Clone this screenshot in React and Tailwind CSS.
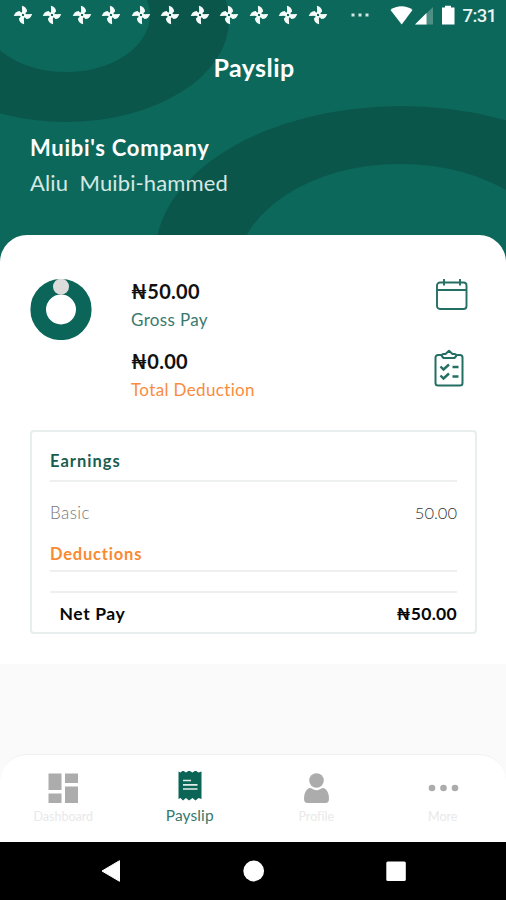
const Pinwheel = () => (
  <svg className="h-5 w-5 shrink-0" viewBox="0 0 20 20" fill="#f4fbf8">
    {[0, 90, 180, 270].map((a) => (
      <path key={a} transform={`rotate(${a} 10 10)`} d="M8.900 0.800C12 1.700 14 3.600 14.100 6.600L11.200 9.200 9.200 8.200Z" />
    ))}
    <path fillRule="evenodd" d="M10 6 14 10 10 14 6 10ZM10 8.800A1.200 1.200 0 1 0 10 11.200 1.200 1.200 0 1 0 10 8.800Z" />
  </svg>
);

const StatusBar = () => (
  <div className="flex h-[30px] items-center pl-[12.5px]">
    <div className="flex gap-[9.5px]">
      {Array.from({ length: 11 }, (_, i) => (
        <Pinwheel key={i} />
      ))}
    </div>
    <svg className="ml-[22px] h-[30px] w-[110px]" viewBox="350 0 110 30" fill="#fff">
      <path d="M351.500 13.500h3v3h-3zM358.500 13.500h3v3h-3zM365.500 13.500h3v3h-3z" fill="#d3e6e1" />
      <path d="M390.500 10C396.500 5 406.500 5 412.500 10L401.700 24.500Z" />
      <path d="M415 24.500 433 7V24.500Z" fill="#4c8f84" />
      <path d="M415 24.500 426.500 13V24.500Z" />
      <path d="M442 7.500h3V5.800h6v1.700h3.500V24.500H442Z" />
    </svg>
    <span className="ml-[3px] pt-[3px] font-[Roboto,sans-serif] text-[18.5px] font-medium tracking-[-0.6px] text-[#e9f5f2]">7:31</span>
  </div>
);

const Rings = () => (
  <svg className="absolute inset-0 h-[270px] w-full" viewBox="0 0 506 270" fill="#0b564b">
    <ellipse cx="66" cy="20" rx="163" ry="102" />
    <ellipse cx="66" cy="15" rx="84" ry="57" fill="#0d685c" />
    <ellipse cx="401" cy="256" rx="246" ry="150" />
    <ellipse cx="400" cy="274" rx="164" ry="110" fill="#0d685c" />
  </svg>
);

const Calendar = () => (
  <svg className="h-[34px] w-[34px]" viewBox="0 0 34 34" fill="none" stroke="#246f63" strokeWidth="1.900">
    <rect x="2" y="4.500" width="29.500" height="26.500" rx="3" />
    <path d="M2 12H31.500M9 1v6.500M25 1v6.500" />
  </svg>
);

const Checklist = () => (
  <svg className="h-[40px] w-[32px]" viewBox="0 0 32 40" fill="none" stroke="#246f63" strokeWidth="2">
    <path d="M8.500 7H5a2.500 2.500 0 0 0-2.500 2.500V35A2.500 2.500 0 0 0 5 37.500H27A2.500 2.500 0 0 0 29.500 35V9.500A2.500 2.500 0 0 0 27 7H23.500" />
    <path d="M8.800 8Q8.800 6 10.500 6H12.500L16 2.700 19.500 6H21.500Q23.200 6 23.200 8L21.500 10H10.500Z" strokeLinejoin="round" />
    <path d="M7.500 18.500 10.500 21.500 16 16.500M7.500 27.500 10.500 30.500 16 25.500M19.500 19h6M19.500 28.500h6" strokeWidth="2.400" />
  </svg>
);

const Tab = ({ label, active, children }) => (
  <div className="flex flex-1 flex-col items-center">
    <svg className="h-[34px] w-[36px]" viewBox="0 0 36 34" fill={active ? "#0b6557" : "#acacac"}>{children}</svg>
    <span className={active ? "text-[15.5px] leading-[20px] tracking-[0.1px] text-[#35796d]" : "text-[12.5px] leading-[24px] text-[#e9e9e9]"}>{label}</span>
  </div>
);

export default function App() {
  return (
    <div className="flex h-[900px] w-[506px] flex-col overflow-hidden bg-[#fafafa] font-[Lato,'Noto_Sans',sans-serif] [font-variant-ligatures:none]">
      <header className="relative h-[270px] shrink-0 bg-[#0d685c]">
        <Rings />
        <div className="relative">
          <StatusBar />
          <h1 className="mt-[21px] pl-[2px] text-center text-[25px] leading-[32px] font-bold tracking-[0.45px] text-white">Payslip</h1>
          <div className="mt-[50px] px-[30px]">
            <div className="text-[22px] leading-[30px] font-bold tracking-[0.72px] text-white">Muibi's Company</div>
            <div className="mt-[5px] text-[22px] leading-[30px] tracking-[0.12px] whitespace-pre text-[#d5e8e3]">Aliu  Muibi-hammed</div>
          </div>
        </div>
      </header>

      <main className="relative -mt-[35px] h-[429px] shrink-0 rounded-t-[27px] bg-white pt-[43px] pr-[29px] pl-[30px]">
        <section className="flex h-[152px]">
          <svg className="h-[62px] w-[62px]" viewBox="0 0 62 62">
            <circle cx="31" cy="31.500" r="22.800" fill="none" stroke="#0b6659" strokeWidth="15.600" />
            <circle cx="31" cy="8.700" r="8" fill="#dcdcdc" />
          </svg>
          <div className="ml-[39px] flex-1">
            <div className="text-[20px] leading-[26px] font-bold tracking-[0.3px] text-[#111]">₦50.00</div>
            <div className="mt-[4px] text-[17px] leading-[24px] tracking-[0.35px] text-[#39796e]">Gross Pay</div>
            <div className="mt-[16px] text-[20px] leading-[26px] font-bold tracking-[0.3px] text-[#111]">₦0.00</div>
            <div className="mt-[4px] text-[17px] leading-[24px] tracking-[0.36px] text-[#f98c40]">Total Deduction</div>
          </div>
          <div className="mr-[8px] flex flex-col items-end">
            <Calendar />
            <div className="mt-[36px] mr-[4px]"><Checklist /></div>
          </div>
        </section>

        <section className="h-[204px] rounded-[4px] border-2 border-[#e8eeed] px-[18px] pt-[17px]">
          <div className="h-[33px] border-b-2 border-[#edf0ef] text-[16.5px] leading-[24px] font-bold tracking-[1px] text-[#1a5d50]">Earnings</div>
          <div className="mt-[18px] flex justify-between leading-[26px] font-light">
            <span className="text-[17px] tracking-[0.4px] text-[#777]">Basic</span>
            <span className="text-[16.5px] text-[#333]">50.00</span>
          </div>
          <div className="mt-[15px] h-[31px] border-b-2 border-[#edf0ef] text-[16.5px] leading-[26px] font-bold tracking-[0.8px] text-[#f98a32]">Deductions</div>
          <div className="mt-[19px] flex justify-between border-t-2 border-[#edf0ef] pt-[8px] pl-[9.5px] text-[17.5px] leading-[26px] font-bold text-[#080808]">
            <span className="tracking-[0.6px]">Net Pay</span>
            <span className="tracking-[0.3px]">₦50.00</span>
          </div>
        </section>
      </main>

      <nav className="mt-[90px] flex h-[88px] shrink-0 rounded-t-[27px] border-t border-[#f0f0f0] bg-white pt-[16px]">
        <Tab label="Dashboard">
          <path d="M3.500 2.500H16.500V19H3.500ZM20 2.500H33V12H20ZM3.500 22.500H16.500V32H3.500ZM20 15.500H33V32H20Z" />
        </Tab>
        <Tab label="Payslip" active>
          <path d="M6.500 0.500 8.500 1.500 11 -0.500 14 1.500 17 -0.500 20.500 1.500 23.500 -0.500 26.500 1.500 29.500 0.500V28L26.500 27 23.500 29.500 20.500 27 17 29.500 14 27 11 29.500 8.500 27 6.500 28Z" />
          <path d="M11 9.500H19M11 13.800H25.500M11 18H25.500" stroke="#dfeeea" strokeWidth="1.700" />
        </Tab>
        <Tab label="Profile">
          <circle cx="18.500" cy="9.500" r="7.300" />
          <path d="M11 17Q13.500 17 15 18.200Q18.500 20.200 22 18.200Q23.500 17 26 17Q31 20 31 27.500Q31 32 27.500 32H9.500Q6 32 6 27.500Q6 20 11 17Z" />
        </Tab>
        <Tab label="More">
          <circle cx="7" cy="17" r="3.300" />
          <circle cx="18.500" cy="17" r="3.300" />
          <circle cx="30" cy="17" r="3.300" />
        </Tab>
      </nav>

      <footer className="h-[58px] shrink-0 bg-black">
        <svg className="h-full w-full" viewBox="0 842 506 58" fill="#fff">
          <path d="M102 871 119.500 860.700V881.300Z" stroke="#fff" strokeLinejoin="round" />
          <circle cx="253.700" cy="871" r="10.400" />
          <rect x="386.300" y="861.500" width="19.500" height="19.500" rx="1.500" />
        </svg>
      </footer>
    </div>
  );
}
